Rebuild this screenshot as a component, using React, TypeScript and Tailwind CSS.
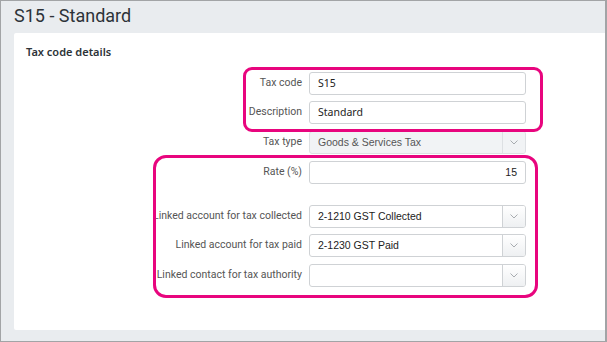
import React from "react";

const Chevron = () => (
  <svg width="8" height="5" viewBox="0 0 8 5" fill="none">
    <path d="M0.5 0.5 L4 4 L7.5 0.5" stroke="#a8acb0" strokeWidth="1" />
  </svg>
);

function Row({
  label,
  children,
  className = "",
}: {
  label: string;
  children: React.ReactNode;
  className?: string;
}) {
  return (
    <div className={"flex items-center h-[23px] " + className}>
      <div className="w-[289px] pr-[1px] text-right text-[10.5px] text-[#555] font-['Roboto',sans-serif] leading-none">
        {label}
      </div>
      <div className="ml-[6px] w-[217px] h-[23px]">{children}</div>
    </div>
  );
}

function TextInput({ value, align = "left" }: { value: string; align?: "left" | "right" }) {
  return (
    <div
      className={
        "h-full w-full rounded-[3px] border border-[#cfd2d5] bg-white flex items-center px-[8px] text-[10.5px] text-[#222] " +
        (align === "right" ? "justify-end font-['Liberation_Sans',Arial,sans-serif]" : "font-['Noto_Sans',sans-serif]")
      }
    >
      {value}
    </div>
  );
}

function Select({ value, disabled = false }: { value: string; disabled?: boolean }) {
  return (
    <div
      className={
        "h-full w-full rounded-[3px] border flex items-stretch overflow-hidden " +
        (disabled ? "border-[#dde0e3] bg-[#f1f3f5]" : "border-[#cfd2d5] bg-white")
      }
    >
      <div
        className={
          "flex-1 flex items-center pl-[8px] text-[10.5px] font-['Liberation_Sans',Arial,sans-serif] " +
          (disabled ? "text-[#555]" : "text-[#222]")
        }
      >
        {value}
      </div>
      <div
        className={
          "w-[23px] flex items-center justify-center border-l " +
          (disabled ? "border-[#dde0e3] bg-[#f1f3f5]" : "border-[#cfd2d5] bg-gradient-to-b from-white to-[#eef0f2]")
        }
      >
        <Chevron />
      </div>
    </div>
  );
}

export default function App() {
  return (
    <div className="relative w-[607px] h-[342px] border border-r-2 border-[#a2a4a6] bg-[#e9ecef] overflow-hidden font-['Noto_Sans',sans-serif]">
      <div className="h-[32px] pl-[13px] pt-[1px] text-[18px] leading-[28px] text-[#2d3338] font-['Roboto',sans-serif]">
        S15 - Standard
      </div>
      <div className="ml-[13px] h-[297px] bg-white rounded-tl-[2px] rounded-bl-[2px]">
        <div className="pl-[12px] pt-[11px] text-[11px] font-semibold text-[#2d3338] leading-[16px]">
          Tax code details
        </div>
        <div className="mt-[12px]">
          <Row label="Tax code">
            <TextInput value="S15" />
          </Row>
          <Row label="Description" className="mt-[6px]">
            <TextInput value="Standard" />
          </Row>
          <Row label="Tax type" className="mt-[7px]">
            <Select value="Goods & Services Tax" disabled />
          </Row>
          <Row label="Rate (%)" className="mt-[7px]">
            <TextInput value="15" align="right" />
          </Row>
          <Row label="Linked account for tax collected" className="mt-[21px]">
            <Select value="2-1210 GST Collected" />
          </Row>
          <Row label="Linked account for tax paid" className="mt-[6px]">
            <Select value="2-1230 GST Paid" />
          </Row>
          <Row label="Linked contact for tax authority" className="mt-[7px]">
            <Select value="" />
          </Row>
        </div>
      </div>
      <div className="absolute left-[242px] top-[66px] w-[300px] h-[65px] rounded-[9px] border-[3px] border-[#e8057e]" />
      <div className="absolute left-[152px] top-[154px] w-[385px] h-[143px] rounded-[13px] border-[3px] border-[#e8057e]" />
    </div>
  );
}
